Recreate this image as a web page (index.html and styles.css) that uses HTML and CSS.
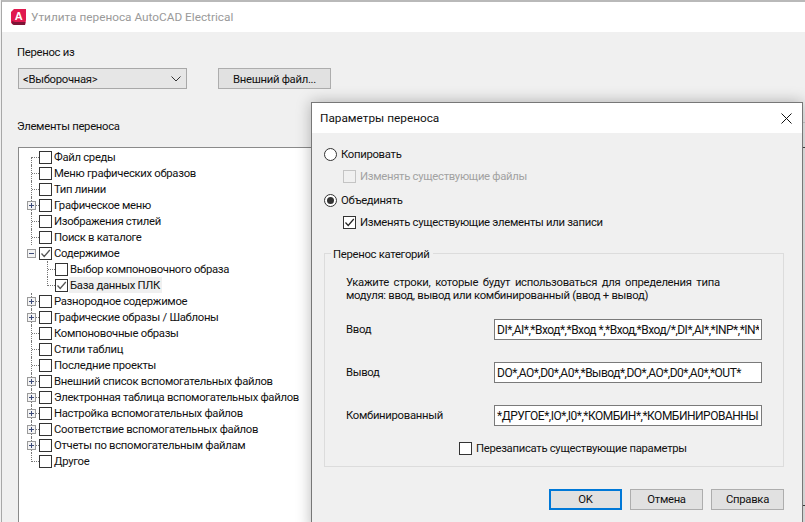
FILE: index.html
```html
<!DOCTYPE html>
<html lang="ru">
<head>
<meta charset="utf-8">
<title>Утилита переноса AutoCAD Electrical</title>
<link rel="stylesheet" href="styles.css">
</head>
<body>
<div class="window main">
  <header class="main-title">
    <svg class="logo" width="16" height="17" viewBox="0 0 16 17">
      <path d="M3 0H15V11L14 16H3L0 14V3Z" fill="#e0194f"/>
      <path d="M1 12L4 13H14.500L14 16H3L1 15Z" fill="#7d1436"/>
      <text x="7.800" y="10.500" class="logo-a">A</text>
    </svg>
    <span>Утилита переноса AutoCAD Electrical</span>
  </header>
  <div class="main-body">
    <div class="label">Перенос из</div>
    <div class="source-row">
      <div class="select">
        <span>&lt;Выборочная&gt;</span>
        <svg width="10" height="6" viewBox="0 0 10 6"><path d="M.5.500 5 5 9.500.500" fill="none" stroke="#333"/></svg>
      </div>
      <div class="btn ext">Внешний файл...</div>
    </div>
    <div class="label items">Элементы переноса</div>
    <div class="tree">
      <div class="row"><i class="twig"></i><b class="cb"></b><span>Файл среды</span></div>
      <div class="row"><i class="twig"></i><b class="cb"></b><span>Меню графических образов</span></div>
      <div class="row"><i class="twig"></i><b class="cb"></b><span>Тип линии</span></div>
      <div class="row"><i class="twig"></i><em class="exp plus"></em><b class="cb"></b><span>Графическое меню</span></div>
      <div class="row"><i class="twig"></i><b class="cb"></b><span>Изображения стилей</span></div>
      <div class="row"><i class="twig"></i><b class="cb"></b><span>Поиск в каталоге</span></div>
      <div class="row open"><em class="exp"></em><b class="cb"><svg width="13" height="13" viewBox="0 0 13 13"><path d="M2.500 6.500 5.200 9.500 10.800 3" fill="none" stroke="#555" stroke-width="1.300"/></svg></b><span>Содержимое</span></div>
      <div class="row child top"><i class="twig"></i><b class="cb"></b><span>Выбор компоновочного образа</span></div>
      <div class="row child end"><i class="twig"></i><b class="cb"><svg width="13" height="13" viewBox="0 0 13 13"><path d="M2.500 6.500 5.200 9.500 10.800 3" fill="none" stroke="#555" stroke-width="1.300"/></svg></b><span class="sel">База данных ПЛК</span></div>
      <div class="row"><i class="twig"></i><em class="exp plus"></em><b class="cb"></b><span>Разнородное содержимое</span></div>
      <div class="row"><i class="twig"></i><em class="exp plus"></em><b class="cb"></b><span>Графические образы / Шаблоны</span></div>
      <div class="row"><i class="twig"></i><b class="cb"></b><span>Компоновочные образы</span></div>
      <div class="row"><i class="twig"></i><b class="cb"></b><span>Стили таблиц</span></div>
      <div class="row"><i class="twig"></i><b class="cb"></b><span>Последние проекты</span></div>
      <div class="row"><i class="twig"></i><em class="exp plus"></em><b class="cb"></b><span>Внешний список вспомогательных файлов</span></div>
      <div class="row"><i class="twig"></i><em class="exp plus"></em><b class="cb"></b><span>Электронная таблица вспомогательных файлов</span></div>
      <div class="row"><i class="twig"></i><em class="exp plus"></em><b class="cb"></b><span>Настройка вспомогательных файлов</span></div>
      <div class="row"><i class="twig"></i><em class="exp plus"></em><b class="cb"></b><span>Соответствие вспомогательных файлов</span></div>
      <div class="row"><i class="twig"></i><em class="exp plus"></em><b class="cb"></b><span>Отчеты по вспомогательным файлам</span></div>
      <div class="row end"><i class="twig"></i><b class="cb"></b><span>Другое</span></div>
    </div>
  </div>
</div>

<div class="edge e1"></div>
<div class="edge e2"></div>
<div class="edge e3"></div>

<div class="window dialog">
  <header class="dlg-title">
    <span>Параметры переноса</span>
    <svg width="11" height="11" viewBox="0 0 11 11"><path d="M.5.500 10.500 10.500M10.500.500.500 10.500" stroke="#111" fill="none"/></svg>
  </header>
  <div class="dlg-body">
    <div class="opt"><b class="radio"></b><span>Копировать</span></div>
    <div class="sub disabled"><b class="cb"></b><span>Изменять существующие файлы</span></div>
    <div class="opt merge"><b class="radio on"></b><span>Объединять</span></div>
    <div class="sub"><b class="cb"><svg width="13" height="13" viewBox="0 0 13 13"><path d="M2.500 6.500 5.200 9.500 10.800 3" fill="none" stroke="#222" stroke-width="1.200"/></svg></b><span>Изменять существующие элементы или записи</span></div>
    <section class="group">
      <div class="legend">Перенос категорий</div>
      <p class="hint"><span class="just">Укажите строки, которые будут использоваться для определения типа</span><br>модуля: ввод, вывод или комбинированный (ввод + вывод)</p>
      <div class="field"><label>Ввод</label><input readonly value="DI*,AI*,*Вход*,*Вход *,*Вход,*Вход/*,DI*,AI*,*INP*,*IN*,*"></div>
      <div class="field"><label>Вывод</label><input readonly value="DO*,AO*,D0*,A0*,*Вывод*,DO*,AO*,D0*,A0*,*OUT*"></div>
      <div class="field"><label>Комбинированный</label><input readonly value="*ДРУГОЕ*,IO*,I0*,*КОМБИН*,*КОМБИНИРОВАННЫЙ*"></div>
      <div class="overwrite"><b class="cb"></b><span>Перезаписать существующие параметры</span></div>
    </section>
    <div class="actions">
      <div class="btn ok">OK</div>
      <div class="btn">Отмена</div>
      <div class="btn">Справка</div>
    </div>
  </div>
</div>
</body>
</html>
```
FILE: styles.css
```css
* { box-sizing: border-box; }
html, body { margin: 0; height: 100%; }
body {
  position: relative;
  width: 805px;
  height: 522px;
  overflow: hidden;
  background: #f0f0f0;
  font: 11.300px/16px Roboto, "Liberation Sans", sans-serif;
  letter-spacing: -.3px;
  color: #111;
}
.window { position: absolute; }
.main {
  left: 1px;
  top: 0;
  width: 804px;
  height: 522px;
  border-top: 2px solid #b9b9b9;
  border-left: 1px solid #a8a8a8;
  background: #f0f0f0;
}
.main-title {
  height: 30px;
  background: #fff;
  display: flex;
  align-items: center;
  gap: 4px;
  padding-left: 9px;
  color: #9a9a9a;
  font-size: 11.800px;
  letter-spacing: 0;
}
.logo-a {
  font: bold 11px "Liberation Sans", sans-serif;
  fill: #fff;
  text-anchor: middle;
}
.main-body { padding: 12px 0 0 15px; }
.label { height: 16px; padding-top: 1px; }
.source-row {
  display: flex;
  align-items: center;
  gap: 31px;
  margin: 8px 0 0 1px;
}
.select {
  width: 169px;
  height: 21px;
  background: #e6e6e6;
  border: 1px solid #a8a8a8;
  display: flex;
  align-items: center;
  justify-content: space-between;
  padding: 0 5px 0 4px;
}
.select span { padding-top: 2px; }
.btn {
  width: 73px;
  height: 21px;
  background: #e1e1e1;
  border: 1px solid #adadad;
  display: flex;
  align-items: center;
  justify-content: center;
}
.ext { width: 113px; padding-top: 2px; }
.items { margin-top: 29px; }
.tree {
  margin: 13px 0 0 1px;
  width: 320px;
  height: 400px;
  background: #fff;
  border: 1px solid #8a8a8a;
  padding: 1px 0 0 12px;
}
.row {
  position: relative;
  height: 16px;
  display: flex;
  align-items: center;
  white-space: nowrap;
}
.twig {
  width: 8px;
  height: 16px;
  border-left: 1px dotted #777;
  position: relative;
  flex: none;
}
.twig::after {
  content: "";
  position: absolute;
  left: 0;
  right: 0;
  top: 8px;
  border-top: 1px dotted #777;
}
.tree > .row:first-child .twig { height: 8px; margin-top: 8px; }
.tree > .row:first-child .twig::after { top: 0; }
.end .twig { height: 9px; margin-bottom: 7px; }
.open { padding-left: 8px; }
.child { padding-left: 16px; }
.exp {
  position: absolute;
  left: -4px;
  top: 4px;
  width: 9px;
  height: 9px;
  background: #f4f4f4 linear-gradient(#3c4a78, #3c4a78) center / 5px 1px no-repeat;
  border: 1px solid #9a9a9a;
}
.exp.plus {
  background:
    linear-gradient(#3c4a78, #3c4a78) center / 5px 1px no-repeat,
    linear-gradient(#3c4a78, #3c4a78) center / 1px 5px no-repeat,
    #f4f4f4;
}
.cb {
  width: 13px;
  height: 13px;
  flex: none;
  background: #fff;
  border: 1px solid #333;
  position: relative;
  display: block;
}
.cb svg { position: absolute; left: -1px; top: -1px; display: block; }
.row > span { margin-left: 2px; height: 16px; padding-top: 1px; line-height: 15px; }
.row > .sel { background: #f0f0f0; margin-left: 1px; padding: 1px 2px 0 1px; }

.edge { position: absolute; left: 802px; width: 3px; height: 1px; background: #444; }
.e1 { top: 122px; background: #cfcfcf; }
.e2 { top: 147px; }
.e3 { top: 505px; }

.dialog {
  left: 311px;
  top: 102px;
  width: 492px;
  height: 430px;
  background: #f0f0f0;
  border: 1px solid #777;
  box-shadow: 0 0 14px rgba(0, 0, 0, .28);
}
.dlg-title {
  height: 30px;
  background: #fff;
  display: flex;
  align-items: center;
  justify-content: space-between;
  padding: 0 10px 0 8px;
  font-size: 11.800px;
  letter-spacing: 0;
}
.dlg-body { padding: 13px 0 0 12px; }
.opt {
  display: flex;
  align-items: center;
  gap: 4px;
  height: 16px;
}
.opt span, .sub span, .overwrite span { padding-top: 2px; }
.radio {
  width: 13px;
  height: 13px;
  border: 1px solid #333;
  border-radius: 50%;
  background: #fff;
  position: relative;
  display: block;
}
.radio.on::after {
  content: "";
  position: absolute;
  left: 2px;
  top: 2px;
  width: 7px;
  height: 7px;
  border-radius: 50%;
  background: #333;
}
.sub {
  display: flex;
  align-items: center;
  gap: 4px;
  height: 16px;
  margin: 6px 0 0 19px;
}
.disabled { color: #a2a2a2; }
.disabled .cb { border-color: #c4c4c4; background: #f0f0f0; }
.merge { margin-top: 8px; }
.group {
  margin-top: 23px;
  width: 460px;
  height: 214px;
  border: 1px solid #dcdcdc;
  padding: 0 21px;
}
.legend {
  display: table;
  height: 16px;
  margin: -8px 0 0 -15px;
  padding: 1px 3px 0 2px;
  background: #f0f0f0;
}
.hint { margin: 13px 0 0; line-height: 13px; }
.just { word-spacing: 2.200px; }
.field {
  display: flex;
  align-items: center;
  justify-content: space-between;
  height: 21px;
  margin-top: 22px;
}
.hint + .field { margin-top: 17px; }
.field input {
  width: 268px;
  height: 21px;
  border: 1px solid #7a7a7a;
  background: #fff;
  padding: 0 2px;
  font: 12px Roboto, "Liberation Sans", sans-serif;
  letter-spacing: -.5px;
  color: #111;
  outline: none;
}
.overwrite {
  display: flex;
  align-items: center;
  gap: 4px;
  margin: 14px 0 0 113px;
  height: 16px;
}
.actions {
  display: flex;
  justify-content: flex-end;
  gap: 8px;
  width: 460px;
  margin-top: 22px;
}
.ok { border: 2px solid #0078d7; }
```
